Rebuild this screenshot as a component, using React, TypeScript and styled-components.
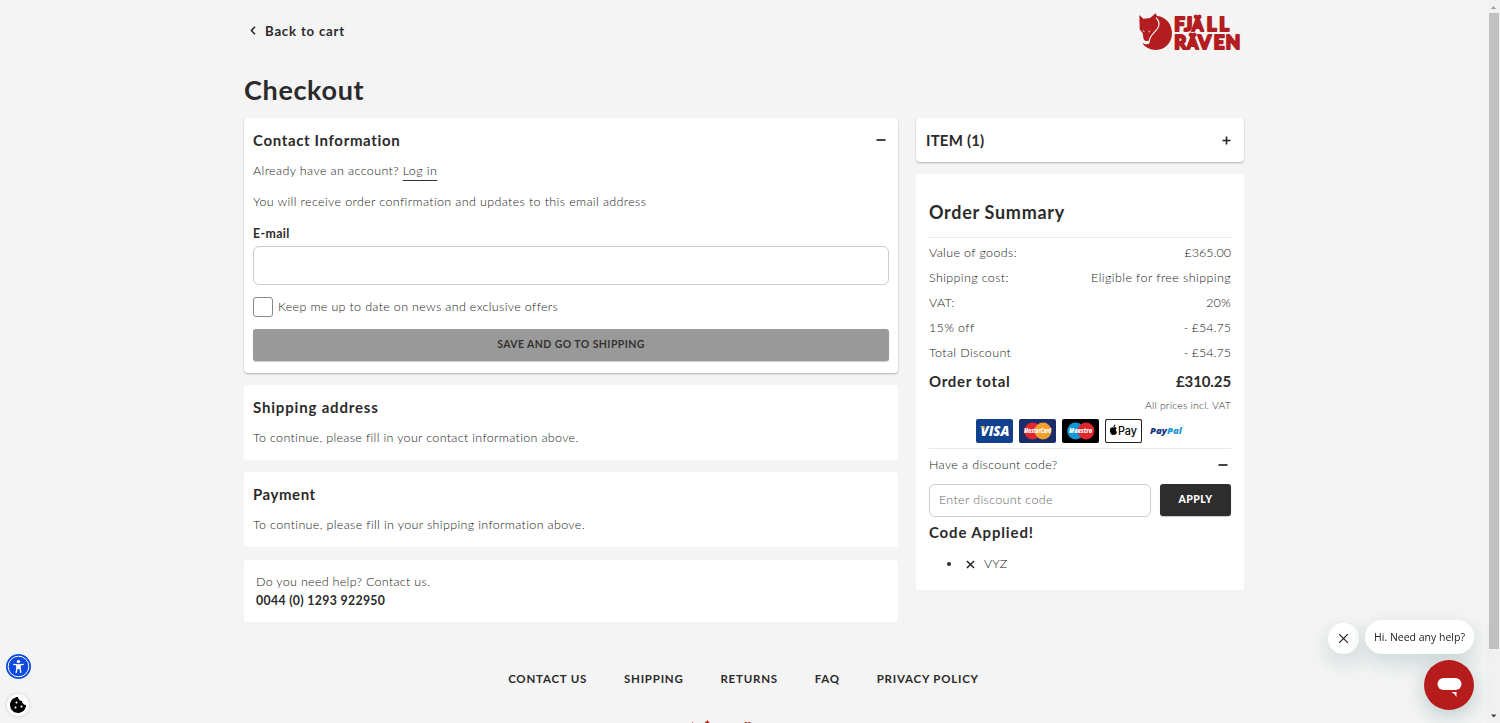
import React from 'react';
import styled, { createGlobalStyle, css } from 'styled-components';
import { FaCookieBite } from 'react-icons/fa';

const GlobalStyle = createGlobalStyle`
  * { box-sizing: border-box; }
  html, body { margin: 0; height: 100%; overflow: hidden; background: #f4f4f4; }
  body { font-family: Lato, "Liberation Sans", sans-serif; color: #2b2b2b; font-kerning: normal; font-variant-ligatures: none; }
  button, input { font-family: inherit; }
  h1, h2, p, ul { margin: 0; padding: 0; }
`;

const Page = styled.div`
  height: 100vh;
  overflow: hidden;
  display: flex;
  flex-direction: column;
  padding-right: 12px;
`;
const Container = styled.div`
  width: 1000px;
  margin-left: 244px;
`;
const TopBar = styled.header`
  height: 62px;
  display: flex;
  justify-content: space-between;
  align-items: center;
  padding: 2px 1px 0 6px;
`;
const BackLink = styled.a`
  display: flex;
  align-items: center;
  gap: 9px;
  font-size: 13.2px;
  font-weight: 700;
  letter-spacing: 0.8px;
  padding-bottom: 3px;
`;
const Title = styled.h1`
  height: 56px;
  line-height: 55px;
  font-size: 27px;
  font-weight: 700;
  letter-spacing: 0.65px;
`;
const Columns = styled.main`
  display: grid;
  grid-template-columns: 654px 328px;
  gap: 18px;
  align-items: start;
`;
const Column = styled.div`
  display: flex;
  flex-direction: column;
  gap: 12.4px;
`;
const Card = styled.section<{ $raised?: boolean; $pad?: string }>`
  background: #fff;
  border-radius: 4px;
  padding: ${p => p.$pad ?? '0 9px 12.5px'};
  ${p => p.$raised && css`box-shadow: 0 1px 2px rgba(0, 0, 0, 0.28);`}
`;
const CardHeader = styled.div`
  height: 44px;
  display: flex;
  align-items: center;
  justify-content: space-between;
`;
const Heading = styled.h2<{ $track?: number; $size?: number }>`
  font-size: ${p => p.$size ?? 15}px;
  font-weight: 700;
  letter-spacing: ${p => p.$track ?? 0.7}px;
  padding-bottom: 1px;
`;
const Body = styled.p<{ $track?: number; $gap?: number }>`
  font-size: 12.5px;
  line-height: 18px;
  font-weight: 300;
  color: #222;
  letter-spacing: ${p => p.$track ?? 0.36}px;
  margin-bottom: ${p => p.$gap ?? 0}px;
`;
const LoginLink = styled.a`
  display: inline-block;
  line-height: 18px;
  box-shadow: 0 1px 0 #333;
`;
const Label = styled.label`
  display: block;
  font-size: 12.3px;
  line-height: 20px;
  font-weight: 700;
  letter-spacing: 0.4px;
  margin-bottom: 2px;
`;
const Input = styled.input`
  display: block;
  width: 100%;
  height: 39px;
  border: 1px solid #ccc;
  border-radius: 6px;
  background: #fff;
`;
const CheckRow = styled.label`
  display: flex;
  align-items: center;
  gap: 5px;
  margin: 12px 0;
  height: 20px;
`;
const CheckBox = styled.span`
  width: 20px;
  height: 20px;
  border: 1px solid #888;
  border-radius: 3px;
`;
const Button = styled.button<{ $tone: 'muted' | 'dark' }>`
  border: 0;
  border-radius: 3px;
  padding: 0 0 2px;
  height: 32px;
  font-size: 10.5px;
  box-shadow: 0 1px 1px rgba(0, 0, 0, 0.2);
  ${p => p.$tone === 'muted'
    ? css`width: 100%; background: #999; color: #333; font-weight: 700; letter-spacing: 0.42px;`
    : css`width: 71px; background: #2d2d2d; color: #fff; font-weight: 900; letter-spacing: 0.4px;`}
`;
const Phone = styled.p`
  font-size: 12.3px;
  line-height: 19px;
  font-weight: 700;
  letter-spacing: 0.33px;
`;
const SummaryTitle = styled.div`
  height: 64px;
  padding-top: 13px;
  display: flex;
  align-items: center;
  border-bottom: 1px solid #ebebeb;
  margin-bottom: 2px;
`;
const Row = styled.div<{ $h?: number; $inset?: number }>`
  height: ${p => p.$h ?? 25}px;
  display: flex;
  align-items: center;
  justify-content: space-between;
  padding-right: ${p => p.$inset ?? 0}px;
`;
const Note = styled.p`
  font-size: 10.5px;
  line-height: 17px;
  font-weight: 300;
  letter-spacing: 0.17px;
  text-align: right;
`;
const Payments = styled.div`
  display: flex;
  justify-content: center;
  gap: 6px;
  padding: 5px 0 5px;
  border-bottom: 1px solid #ebebeb;
`;
const CodeForm = styled.div`
  display: flex;
  gap: 9px;
  margin: 4px 0 6px;
`;
const CodeInput = styled(Input)`
  flex: 1;
  min-width: 0;
  height: 33px;
  padding: 0 9px 2px;
  font-size: 12.5px;
  font-weight: 300;
  letter-spacing: 0.34px;
  &::placeholder { color: #666; opacity: 1; }
`;
const CodeList = styled.ul`
  list-style: none;
  display: flex;
  padding: 13px 0 0 18px;
`;
const CodeItem = styled.li`
  display: flex;
  align-items: center;
  gap: 9px;
`;
const Dot = styled.span`
  width: 4px;
  height: 4px;
  border-radius: 50%;
  background: #2b2b2b;
  margin-right: 6px;
`;
const FooterLinks = styled.nav`
  display: flex;
  justify-content: center;
  gap: 36.8px;
  width: 1000px;
  margin: 48px 0 0 243.5px;
  font-size: 11.5px;
  line-height: 18px;
  font-weight: 700;
  letter-spacing: 0.78px;
`;
const FooterLogo = styled.div`
  display: flex;
  justify-content: center;
  width: 1000px;
  margin: 31px 0 0 241px;
`;
const ScrollTrack = styled.div`
  position: fixed;
  inset: 0 0 0 auto;
  width: 13px;
  background: #f1f1f1;
  display: flex;
  flex-direction: column;
  align-items: center;
  justify-content: space-between;
`;
const ScrollThumb = styled.div`
  width: 10px;
  height: 636px;
  margin: 0 0 auto;
  background: #c1c1c1;
`;
const Widgets = styled.div`
  position: fixed;
  left: 6px;
  top: 654px;
  display: flex;
  flex-direction: column;
  align-items: center;
  gap: 15px;
`;
const CookieButton = styled.div`
  width: 22px;
  height: 22px;
  border-radius: 50%;
  background: #fff;
  display: flex;
  align-items: center;
  justify-content: center;
  box-shadow: 0 0 4px rgba(0, 0, 0, 0.15);
  margin-right: 1px;
`;
const ChatPrompt = styled.div`
  position: fixed;
  right: 26px;
  top: 620px;
  display: flex;
  align-items: flex-end;
  gap: 6.5px;
`;
const ChatBubble = styled.div`
  width: 109px;
  height: 34px;
  border-radius: 17px;
  background: #fff;
  font: 400 10.5px/34px "Open Sans", "Noto Sans", sans-serif;
  text-align: center;
  white-space: nowrap;
  color: #222;
  box-shadow: 0 8px 22px rgba(60, 110, 110, 0.22);
`;
const ChatClose = styled.div`
  width: 31px;
  height: 31px;
  border-radius: 50%;
  background: #fff;
  display: flex;
  align-items: center;
  justify-content: center;
  box-shadow: 0 8px 22px rgba(60, 110, 110, 0.22);
`;
const ChatButton = styled.div`
  position: fixed;
  right: 26px;
  top: 660px;
  width: 50px;
  height: 50px;
  border-radius: 50%;
  background: #b71c1c;
  box-shadow: 0 6px 20px rgba(60, 110, 110, 0.3);
`;
const MinusIcon = styled.svg<{ $shift?: number }>`
  margin-right: ${p => p.$shift ?? 0}px;
`;

const Minus = ({ shift }: { shift: number }) => (
  <MinusIcon $shift={shift} width="10" height="10" viewBox="0 0 10 10"><path d="M0.500 5H9.500" stroke="#222" strokeWidth="1.700" /></MinusIcon>
);
const Cross = ({ size, stroke = 1.5 }: { size: number; stroke?: number }) => (
  <svg width={size} height={size} viewBox="0 0 10 10"><path d="M1 1L9 9M9 1L1 9" stroke="#222" strokeWidth={stroke} /></svg>
);

const Logo = ({ scale = 1 }: { scale?: number }) => (
  <svg width={105 * scale} height={40 * scale} viewBox="0 0 315 120">
    <path fill="#b31d1f" d="M4 9L16 20L36 18Q46 10 53 4L57 12C84 14 102 37 102 64C102 93 80 114 54 114C35 114 21 106 13 94C28 100 37 96 35 86L22 87L17 82L14 64L5 52Z" />
    <path fill="none" stroke="#f4f4f4" strokeWidth="3.400" strokeLinecap="round" d="M55 18C65 29 65 42 56 53C46 65 35 72 34 87" />
    <path fill="#f4f4f4" d="M12 54L20 58L18 60ZM31 59L38 55L33 62Z" />
    <g fill="#b31d1f" stroke="#b31d1f" strokeWidth="6" strokeLinejoin="round" fontFamily="Lato" fontWeight="900" fontSize="56">
      <text y="57"><tspan x="109">F</tspan><tspan x="139">J</tspan><tspan x="162" fontSize="48">Ä</tspan><tspan x="206">L</tspan><tspan x="244">L</tspan></text>
      <text y="110"><tspan x="109">R</tspan><tspan x="147" fontSize="48">Ä</tspan><tspan x="180">V</tspan><tspan x="227">E</tspan><tspan x="263">N</tspan></text>
    </g>
  </svg>
);

const Brand = ({ bg, children }: { bg: string; children: React.ReactNode }) => (
  <svg width="37" height="24" viewBox="0 0 37 24">
    <rect width="37" height="24" rx="2" fill={bg} />
    {children}
  </svg>
);
const Circles = ({ left, right, label }: { left: string; right: string; label: string }) => (
  <>
    <circle cx="13.600" cy="12" r="8.400" fill={left} />
    <circle cx="24" cy="12" r="8.400" fill={right} />
    <text x="18.600" y="14.200" textAnchor="middle" textLength={label === 'Maestro' ? 23 : 27} lengthAdjust="spacingAndGlyphs" fontFamily="Open Sans" fontStyle="italic" fontWeight="800" fontSize="6.400" fill="#fff">{label}</text>
  </>
);

const rows: [string, string, number?][] = [
  ['Value of goods:', '£365.00', 0],
  ['Shipping cost:', 'Eligible for free shipping', 0.4],
  ['VAT:', '20%', 0.2],
  ['15% off', '- £54.75', 0],
  ['Total Discount', '- £54.75', 0],
];

export default function App() {
  return (
    <Page>
      <GlobalStyle />
      <Container>
        <TopBar>
          <BackLink>
            <svg width="6" height="9" viewBox="0 0 6 9"><path d="M5 0.800L1.400 4.500L5 8.200" fill="none" stroke="#222" strokeWidth="1.500" /></svg>
            Back to cart
          </BackLink>
          <Logo />
        </TopBar>
        <Title>Checkout</Title>
        <Columns>
          <Column>
            <Card $raised $pad="0 9px 12px">
              <CardHeader><Heading $track={0.65}>Contact Information</Heading><Minus shift={3.5} /></CardHeader>
              <Body $gap={13} $track={0.38}>Already have an account? <LoginLink>Log in</LoginLink></Body>
              <Body $gap={13}>You will receive order confirmation and updates to this email address</Body>
              <Label>E-mail</Label>
              <Input />
              <CheckRow><CheckBox /><Body $track={0.33}>Keep me up to date on news and exclusive offers</Body></CheckRow>
              <Button $tone="muted">SAVE AND GO TO SHIPPING</Button>
            </Card>
            <Card>
              <CardHeader><Heading $track={0.82}>Shipping address</Heading></CardHeader>
              <Body $track={0.32}>To continue, please fill in your contact information above.</Body>
            </Card>
            <Card $pad="0 9px 13px">
              <CardHeader><Heading $track={0.55}>Payment</Heading></CardHeader>
              <Body $track={0.34}>To continue, please fill in your shipping information above.</Body>
            </Card>
            <Card $pad="13px 12px 12px">
              <Body $track={0.3}>Do you need help? Contact us.</Body>
              <Phone>0044 (0) 1293 922950</Phone>
            </Card>
          </Column>
          <Column>
            <Card $raised $pad="0 13px 0 10px">
              <CardHeader>
                <Heading $track={0.2}>ITEM (1)</Heading>
                <svg width="9" height="9" viewBox="0 0 9 9"><path d="M0.500 4.500H8.500M4.500 0.500V8.500" stroke="#222" strokeWidth="1.600" /></svg>
              </CardHeader>
            </Card>
            <Card $pad="0 13px 17px">
              <SummaryTitle><Heading $size={18}>Order Summary</Heading></SummaryTitle>
              {rows.map(([k, v, track]) => (
                <Row key={k}><Body>{k}</Body><Body $track={track}>{v}</Body></Row>
              ))}
              <Row $h={32}><Heading>Order total</Heading><Heading $track={-0.1}>£310.25</Heading></Row>
              <Note>All prices incl. VAT</Note>
              <Payments>
                <Brand bg="#10418e">
                  <text x="4.500" y="17" textLength="29" lengthAdjust="spacingAndGlyphs" fontFamily="Open Sans" fontStyle="italic" fontWeight="800" fontSize="13.500" fill="#fff">VISA</text>
                  <path d="M3.600 7H8L9.200 10.500Q7 8 3.600 7Z" fill="#f2a63a" />
                </Brand>
                <Brand bg="#1a2d6b"><Circles left="#e0262f" right="#f0a02f" label="MasterCard" /></Brand>
                <Brand bg="#000"><Circles left="#1296d8" right="#e0262f" label="Maestro" /></Brand>
                <Brand bg="#222">
                  <rect x="1" y="1" width="35" height="22" rx="1.500" fill="#fff" />
                  <path d="M8.700 8.600C9.800 8 11 8 11.800 9C10.300 10 10.500 12.300 12.100 13C11.500 14.700 10.500 16 9.700 15.900C9 15.600 8.300 15.600 7.600 15.900C6.300 16 4.900 13.400 4.900 11.400C4.900 8.800 7 7.900 8.700 8.600ZM8.400 8C8.400 6.600 9.300 5.700 10.400 5.500C10.500 6.900 9.600 7.900 8.400 8Z" fill="#000" />
                  <text x="13" y="16" textLength="19" lengthAdjust="spacingAndGlyphs" fontFamily="Inter" fontWeight="500" fontSize="11.500" fill="#000">Pay</text>
                </Brand>
                <svg width="37" height="24" viewBox="0 0 37 24" fontFamily="Open Sans" fontStyle="italic" fontWeight="800" fontSize="9.500">
                  <text x="2" y="14.800" textLength="17" lengthAdjust="spacingAndGlyphs" fill="#17397f">Pay</text>
                  <text x="19" y="14.800" textLength="15" lengthAdjust="spacingAndGlyphs" fill="#1f9ad6">Pal</text>
                </svg>
              </Payments>
              <Row $h={31} $inset={3}><Body>Have a discount code?</Body><Minus shift={0} /></Row>
              <CodeForm>
                <CodeInput placeholder="Enter discount code" />
                <Button $tone="dark">APPLY</Button>
              </CodeForm>
              <Heading $track={0.85}>Code Applied!</Heading>
              <CodeList>
                <CodeItem><Dot /><Cross size={9} stroke={1.6} /><Body $track={0}>VYZ</Body></CodeItem>
              </CodeList>
            </Card>
          </Column>
        </Columns>
      </Container>
      <FooterLinks>
        <span>CONTACT US</span><span>SHIPPING</span><span>RETURNS</span><span>FAQ</span><span>PRIVACY POLICY</span>
      </FooterLinks>
      <FooterLogo><Logo scale={0.95} /></FooterLogo>
      <ScrollTrack>
        <svg width="13" height="13" viewBox="0 0 13 13"><path d="M4 9L6.500 6L9 9Z" fill="#9a9a9a" /></svg>
        <ScrollThumb />
        <svg width="13" height="13" viewBox="0 0 13 13"><path d="M4 4.500H9.500L6.700 7.500Z" fill="#444" /></svg>
      </ScrollTrack>
      <Widgets>
        <svg width="25" height="25" viewBox="0 0 25 25">
          <circle cx="12.500" cy="12.500" r="12.500" fill="#0d4be0" />
          <circle cx="12.500" cy="12.500" r="10.300" fill="none" stroke="#fff" strokeWidth="1" />
          <circle cx="12.500" cy="7.600" r="1.700" fill="#fff" />
          <path d="M7.700 10.400L11 10.900V14L10.200 18.300M17.300 10.400L14 10.900V14L14.800 18.300" fill="none" stroke="#fff" strokeWidth="1.400" strokeLinecap="round" />
          <path d="M10.500 10.300H14.500V15H10.500Z" fill="#fff" />
        </svg>
        <CookieButton><FaCookieBite size={16} color="#000" /></CookieButton>
      </Widgets>
      <ChatPrompt>
        <ChatClose><Cross size={11} stroke={1.1} /></ChatClose>
        <ChatBubble>Hi. Need any help?</ChatBubble>
      </ChatPrompt>
      <ChatButton>
        <svg width="50" height="50" viewBox="0 0 50 50">
          <rect x="13.500" y="18" width="24" height="12" rx="6" fill="#fff" />
          <path d="M27.500 32H32.500V37Q31.500 34 27.500 32Z" fill="#fff" />
        </svg>
      </ChatButton>
    </Page>
  );
}
